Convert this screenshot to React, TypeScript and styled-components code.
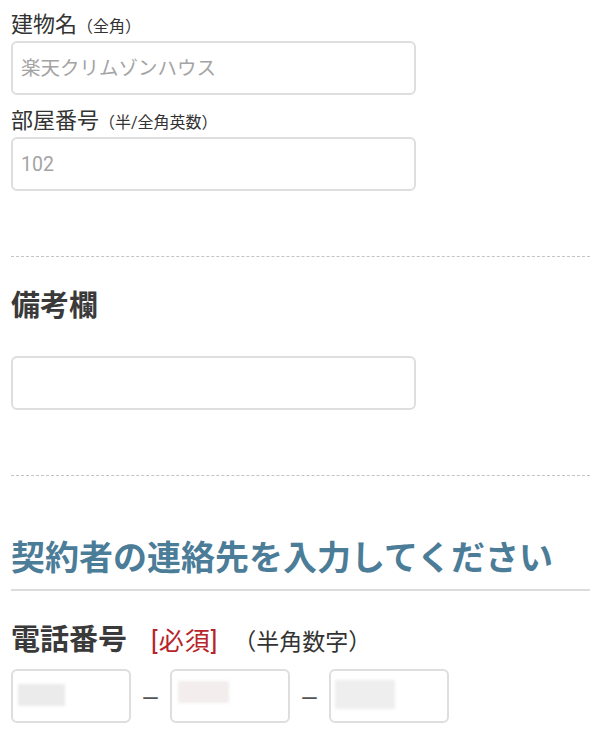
import React from "react";
import styled, { createGlobalStyle } from "styled-components";

const Global = createGlobalStyle`
  html, body { margin: 0; padding: 0; background: #fff; }
  body { font-family: Roboto, "Noto Sans CJK JP", sans-serif; color: #333; }
  * { box-sizing: border-box; }
`;

const Page = styled.div`
  width: 600px;
  padding: 14px 10px 0 11px;
  display: flex;
  flex-direction: column;
`;

const Label = styled.div<{ $mt?: number }>`
  display: flex;
  align-items: baseline;
  font-size: 22px;
  line-height: 22px;
  height: 22px;
  color: #333;
  margin-top: ${(p) => p.$mt ?? 0}px;
`;

const Note = styled.span`
  font-size: 16px;
  color: #333;
`;

const TextInput = styled.input<{ $mt?: number }>`
  display: block;
  width: 405px;
  height: 54px;
  margin-top: ${(p) => p.$mt ?? 5}px;
  padding: 0 8px;
  border: 2px solid #dedede;
  border-radius: 6px;
  font-family: Roboto, "Noto Sans CJK JP", sans-serif;
  font-size: 19.5px;
  color: #333;
  background: #fff;
  outline: none;
  &::placeholder { color: #a4a4a4; }
`;

const Dashed = styled.hr<{ $mt: number }>`
  width: 100%;
  margin: ${(p) => p.$mt}px 0 0;
  border: none;
  border-top: 1px dashed #c4c4c4;
  height: 0;
`;

const Heading = styled.h2<{ $mt: number }>`
  margin: ${(p) => p.$mt}px 0 0;
  height: 29px;
  font-size: 29px;
  line-height: 29px;
  font-weight: 700;
  color: #3a3a3a;
  display: flex;
  align-items: baseline;
`;

const SectionTitle = styled.h1`
  margin: 65px 0 0;
  padding-bottom: 14px;
  border-bottom: 2px solid #dcdcdc;
  font-size: 34px;
  line-height: 34px;
  font-weight: 700;
  color: #4b7c98;
`;

const Required = styled.span`
  font-size: 25px;
  line-height: 29px;
  letter-spacing: 1px;
  font-weight: 400;
  color: #b7242a;
  margin-left: 24px;
`;

const Hint = styled.span`
  font-size: 23px;
  line-height: 29px;
  font-weight: 400;
  color: #333;
  margin-left: 15px;
`;

const PhoneRow = styled.div`
  display: flex;
  align-items: center;
  margin-top: 14px;
`;

const PhoneBox = styled.div<{ $pl: number }>`
  width: 120px;
  height: 54px;
  border: 2px solid #dedede;
  border-radius: 6px;
  display: flex;
  align-items: center;
  padding-left: ${(p) => p.$pl - 2}px;
`;

const Blur = styled.span<{ $w: number; $h: number; $c: string; $dy: number }>`
  display: block;
  width: ${(p) => p.$w}px;
  height: ${(p) => p.$h}px;
  background: ${(p) => p.$c};
  filter: blur(1.5px);
  transform: translateY(${(p) => p.$dy}px);
`;

const Dash = styled.span`
  width: 39px;
  text-align: center;
  font-family: "Liberation Sans", sans-serif;
  font-size: 26px;
  color: #555;
  line-height: 54px;
`;

export default function App() {
  return (
    <>
      <Global />
      <Page>
        <Label>
          建物名<Note>（全角）</Note>
        </Label>
        <TextInput placeholder="楽天クリムゾンハウス" />
        <Label $mt={15}>
          部屋番号<Note>（半/全角英数）</Note>
        </Label>
        <TextInput placeholder="102" />
        <Dashed $mt={65} />
        <Heading $mt={35}>備考欄</Heading>
        <TextInput $mt={35} />
        <Dashed $mt={65} />
        <SectionTitle>契約者の連絡先を入力してください</SectionTitle>
        <Heading $mt={35}>
          電話番号<Required>[必須]</Required>
          <Hint>（半角数字）</Hint>
        </Heading>
        <PhoneRow>
          <PhoneBox $pl={7}>
            <Blur $w={47} $h={22} $c="#ebebeb" $dy={-1} />
          </PhoneBox>
          <Dash>–</Dash>
          <PhoneBox $pl={8}>
            <Blur $w={51} $h={22} $c="#f3eded" $dy={-4} />
          </PhoneBox>
          <Dash>–</Dash>
          <PhoneBox $pl={6}>
            <Blur $w={60} $h={29} $c="#eeeeee" $dy={-2} />
          </PhoneBox>
        </PhoneRow>
      </Page>
    </>
  );
}
